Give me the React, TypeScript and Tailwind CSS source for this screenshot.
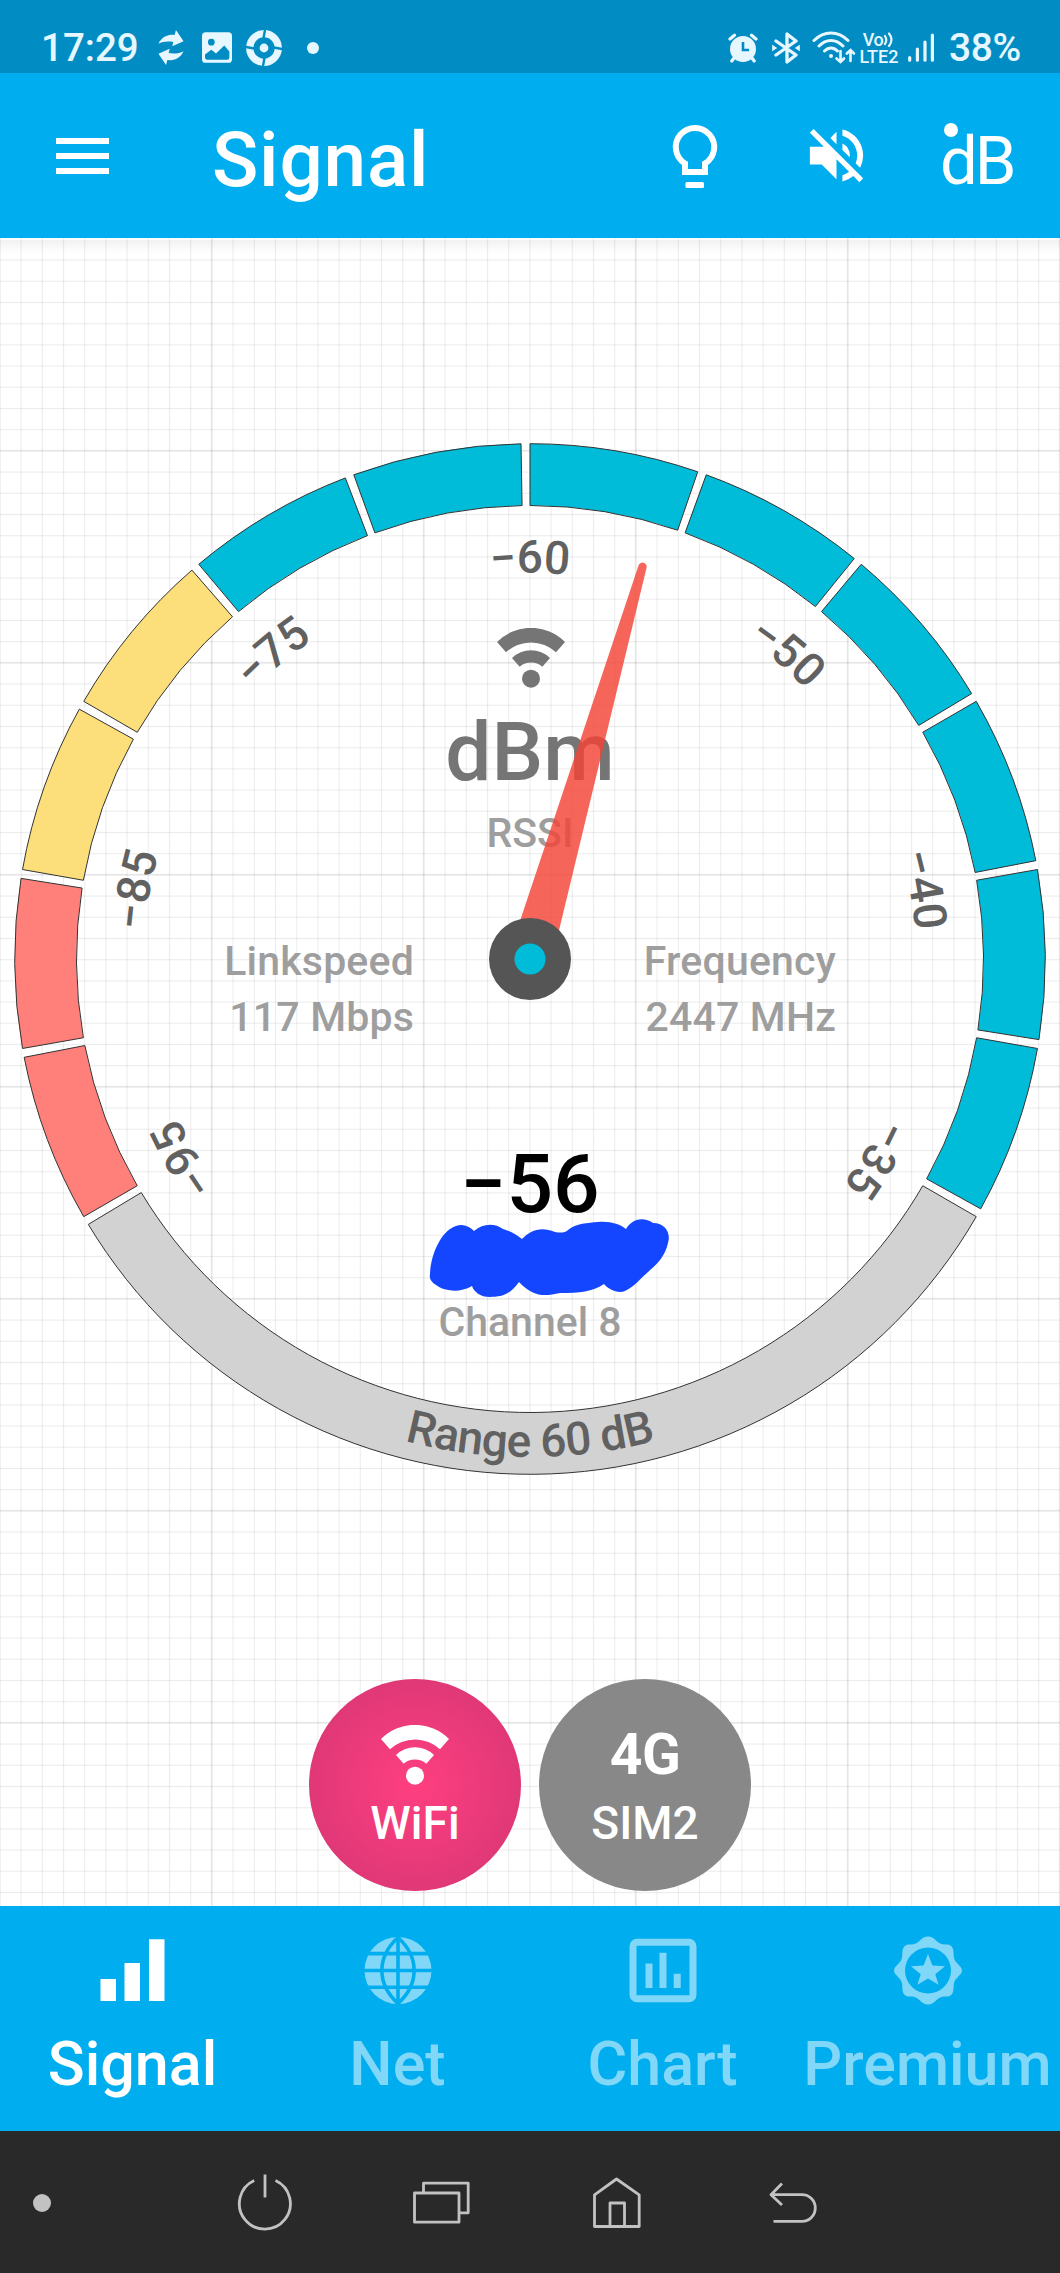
import type { ReactNode } from "react";
import { MdVolumeOff } from "react-icons/md";

type Segment = { from: number; to: number; fill: string };

const CYAN = "#00bcd8";
const YELLOW = "#fcdf7b";
const RED = "#ff7f7b";

const segmentFills = [RED, RED, YELLOW, YELLOW, CYAN, CYAN, CYAN, CYAN, CYAN, CYAN, CYAN, CYAN];

const segments: Segment[] = [
  ...segmentFills.map((fill, i) => ({ from: -120 + i * 20, to: -101 + i * 20, fill })),
  { from: 120, to: 239, fill: "#d2d2d2" },
];

const scaleLabels = [
  { angle: -120, text: "−95" },
  { angle: -80, text: "−85" },
  { angle: -40, text: "−75" },
  { angle: 0, text: "−60" },
  { angle: 40, text: "−50" },
  { angle: 80, text: "−40" },
  { angle: 120, text: "−35" },
];

// angle is measured clockwise from 12 o'clock
function polar(radius: number, angle: number) {
  const rad = (angle * Math.PI) / 180;
  return `${(radius * Math.sin(rad)).toFixed(2)} ${(-radius * Math.cos(rad)).toFixed(2)}`;
}

function segmentPath(from: number, to: number, outer = 515.3, inner = 453.5) {
  return `M${polar(outer, from)}A${outer} ${outer} 0 0 1 ${polar(outer, to)}L${polar(inner, to)}A${inner} ${inner} 0 0 0 ${polar(inner, from)}Z`;
}

function WifiIcon({ className }: { className?: string }) {
  return (
    <svg viewBox="0 0 204 180" className={className} fill="currentColor">
      <path d="M0 42A143.6 143.6 0 0 1 204 42L177 73A110 110 0 0 0 27 73Z" />
      <path d="M45 90A82 82 0 0 1 159 90L136 116A52 52 0 0 0 68 116Z" />
      <circle cx="102" cy="152" r="27" />
    </svg>
  );
}

function StatusBar() {
  return (
    <div className="flex h-[73px] items-center bg-[#018dc3] pl-[41px] pt-[22px] text-[#e6f7ff]">
      <span className="w-[100px] text-[38.5px] font-medium leading-[44px]">17:29</span>
      <svg viewBox="0 0 76 106" className="ml-[17px] h-[35px] w-[26px]" fill="currentColor">
        <path d="M0 42C10 20 30 13 49 15L53 0L76 34L42 49L45 36C28 33 12 35 0 42Z" />
        <path transform="rotate(180 38 53)" d="M0 42C10 20 30 13 49 15L53 0L76 34L42 49L45 36C28 33 12 35 0 42Z" />
      </svg>
      <svg viewBox="0 0 90 92" className="ml-[18px] h-[31px] w-[30px]">
        <rect width="90" height="92" rx="11" fill="currentColor" />
        <circle cx="28" cy="30" r="10" fill="#018dc3" />
        <path d="M9 67L28 53L42 64L67 40L82 58V76Q82 83 75 83H16Q9 83 9 76Z" fill="#018dc3" />
      </svg>
      <svg viewBox="0 0 36 36" className="ml-[14px] size-9">
        <circle cx="18" cy="18" r="14.3" stroke="currentColor" strokeWidth="7.2" fill="none" />
        <circle cx="18" cy="18" r="4.4" fill="currentColor" />
        <path d="M19 0L17.5 8M17 36L18.5 28M0 17L8 18.5M36 19L28 17.5" stroke="#018dc3" strokeWidth="2.4" />
      </svg>
      <span className="ml-[25px] size-3 rounded-full bg-current" />

      <svg viewBox="0 0 30 30" className="ml-[409px] size-[30px]" fill="none" stroke="currentColor" strokeWidth="3.2" strokeLinecap="round">
        <circle cx="15" cy="16" r="13" fill="currentColor" stroke="none" />
        <path d="M2 6L6.5 2.2M28 6L23.5 2.2M6 25L3.8 28M24 25L26.2 28" />
        <path d="M15 9V17H21" stroke="#018dc3" strokeWidth="2.6" strokeLinecap="butt" />
      </svg>
      <svg viewBox="0 0 28 32" className="ml-[14px] h-8 w-7" fill="none" stroke="currentColor" strokeWidth="3.3" strokeLinecap="round" strokeLinejoin="round">
        <path d="M4 9L24 23L15 30V2L24 9L4 23" />
        <path d="M.5 13.5L4.5 16L.5 18.5ZM27.5 13.5L23.5 16L27.5 18.5Z" fill="currentColor" strokeWidth="1" />
      </svg>
      <svg viewBox="0 0 44 34" className="ml-[12px] h-[34px] w-11" fill="none" stroke="currentColor" strokeWidth="3" strokeLinecap="round">
        <path d="M2 9.5C12 -.5 26 -.5 36 9.5M7 15C14 7.5 24 7.5 31 15M12.5 20C16.5 16 21.5 16 25.5 20" />
        <circle cx="19" cy="25" r="2" fill="currentColor" stroke="none" />
        <path d="M28.5 20V31M24.5 27.5L28.5 31L32 27.5M38.5 30V19M34.8 22.5L38.5 19L42 22.5" strokeWidth="2.6" />
      </svg>
      <span className="ml-[3px] flex w-10 flex-col items-center text-[18px] font-medium leading-[17px]">
        <span className="flex items-center tracking-[-0.5px]">
          Vo
          <svg viewBox="0 0 12 17" className="h-[17px] w-[12px]" fill="none" stroke="currentColor" strokeWidth="2.2" strokeLinecap="round">
            <path d="M2 5Q4.5 9 2 13M6 2.5Q11 8.5 6 15" />
          </svg>
        </span>
        <span>LTE2</span>
      </span>
      <svg viewBox="0 0 26 29" className="ml-[9px] h-[29px] w-[26px]" stroke="currentColor" strokeWidth="3.2" strokeLinecap="round">
        <path d="M1.7 24.5V27.2M9.4 16V27.2M17 9V27.2M24.4 2V27.2" />
      </svg>
      <span className="ml-[15px] text-[39px] font-medium leading-[44px] tracking-[-0.4px]">38%</span>
    </div>
  );
}

function Header() {
  return (
    <header className="flex h-[165px] items-center bg-[#00aef0] pl-14 text-white">
      <div className="flex w-[53px] flex-col gap-[9px]">
        <span className="h-1.5 bg-white" />
        <span className="h-1.5 bg-white" />
        <span className="h-1.5 bg-white" />
      </div>
      <h1 className="ml-[103px] mt-[9px] w-[453px] text-[76.5px] font-medium leading-[90px] tracking-[0.8px]">Signal</h1>
      <svg viewBox="0 0 60 72" className="h-[72px] w-[60px]" fill="none" stroke="currentColor" strokeWidth="6">
        <path d="M20 43.5A19.2 19.2 0 1 1 40 43.5V52H20Z" />
        <rect x="20.5" y="62" width="18.5" height="6" rx="1.5" fill="currentColor" stroke="none" />
      </svg>
      <MdVolumeOff className="ml-[76px] size-[71px]" />
      <span className="relative ml-[68px] mt-[10px] text-[67px] leading-[80px] tracking-[-3px]">
        dB
        <span className="absolute left-[4px] top-0.5 size-3.5 rounded-full bg-white" />
      </span>
    </header>
  );
}

function Gauge() {
  return (
    <svg viewBox="-530 -520 1060 1040" className="h-[1040px] w-[1060px]" fontWeight="500">
      <defs>
        {scaleLabels.map(({ angle }) => (
          <path key={angle} id={`label${angle}`} d={`M${polar(386, angle - 20)}A386 386 0 0 1 ${polar(386, angle + 20)}`} />
        ))}
        <path id="rangeArc" d={`M${polar(498, 220)}A498 498 0 0 0 ${polar(498, 140)}`} />
      </defs>

      {segments.map(({ from, to, fill }) => (
        <path key={from} d={segmentPath(from, to)} fill={fill} stroke="#333" strokeWidth="1" />
      ))}

      <g fill="#616161" fontSize="46" textAnchor="middle">
        {scaleLabels.map(({ angle, text }) => (
          <text key={angle}>
            <textPath href={`#label${angle}`} startOffset="50%">{text}</textPath>
          </text>
        ))}
        <text letterSpacing="-0.6">
          <textPath href="#rangeArc" startOffset="50%">Range 60 dB</textPath>
        </text>
      </g>

      <svg x="-33" y="-331" width="68" height="60" className="text-[#757575]">
        <WifiIcon />
      </svg>

      <g textAnchor="middle">
        <text y="-179" fontSize="82" fill="#757575">dBm</text>
        <text y="-112.5" fontSize="41" fill="#9e9e9e">RSSI</text>
        <text y="253" fontSize="82" fill="#000">−56</text>
        <text y="377" fontSize="41" fill="#9e9e9e">Channel 8</text>
      </g>
      <g fontSize="41" fill="#9e9e9e" letterSpacing="0.2">
        <text x="-116" y="16" textAnchor="end">Linkspeed</text>
        <text x="-116" y="72" textAnchor="end">117 Mbps</text>
        <text x="306" y="16" textAnchor="end">Frequency</text>
        <text x="306" y="72" textAnchor="end">2447 MHz</text>
      </g>

      <path
        fill="#1446ff"
        d="M-100 315C-99 294-89 276-80 270C-70 263-62 266-56 272C-47 264-35 264-27 270C-20 272-14 275-8 280C0 272 10 267 25 273C30 274 35 274 38 271C46 264 58 264 68 263C80 262 90 265 96 270C103 259 114 258 123 264C136 264 141 275 138 284C135 298 126 306 118 313C110 320 104 328 95 332C88 335 78 330 74 325C62 333 50 334 30 334C15 337 4 339-11 323C-20 336-29 338-40 338C-50 338-56 333-58 327C-70 334-84 332-91 328C-98 324-101 321-100 315Z"
      />

      <path transform="rotate(16)" d="M-21.5 0L-4.2 -408A4.2 4.2 0 0 1 4.2 -408L21.5 0Z" fill="#f44336" fillOpacity="0.82" />
      <circle r="41" fill="#555" />
      <circle r="15.5" fill={CYAN} />
    </svg>
  );
}

function SourceButton({ label, className, children }: { label: string; className: string; children: ReactNode }) {
  return (
    <button className={`flex size-[212px] flex-col items-center rounded-full pt-[46px] text-white ${className}`}>
      <span className="flex h-[60px] items-center text-[57px] font-bold leading-[60px] tracking-[-0.5px]">{children}</span>
      <span className="mt-[11px] text-[46px] font-medium leading-[54px]">{label}</span>
    </button>
  );
}

const tabs = [
  {
    label: "Signal",
    icon: <path d="M1.5 47H17V69H1.5ZM25.5 31H41V69H25.5ZM50 7.3H65.5V69H50Z" />,
  },
  {
    label: "Net",
    icon: (
      <>
        <circle cx="34" cy="38.5" r="33.5" />
        <g fill="none" stroke="#00aef0" strokeWidth="3.6">
          <path d="M34 4V73M0 38.5H68M0 21.6H68M0 55.2H68" />
          <path d="M34 5.5C12.5 25 12.5 52 34 71.5C55.5 52 55.5 25 34 5.5Z" />
        </g>
      </>
    ),
  },
  {
    label: "Chart",
    icon: (
      <>
        <rect x="4" y="10.3" width="60" height="56.5" rx="4" fill="none" stroke="currentColor" strokeWidth="7" />
        <path d="M16.5 31.5H23.5V56H16.5ZM30.5 20.7H37.5V56H30.5ZM44.7 41.7H51.7V56H44.7Z" />
      </>
    ),
  },
  {
    label: "Premium",
    icon: (
      <>
        <path
          fillRule="evenodd"
          d="M34 4.5C42 4.5 42 13 52 12.5C61 12.5 59 20 60 26C61 31 68 34 68 38.5C68 43 61 46 60 51C59 57 61 64.5 52 64.5C42 64 42 72.5 34 72.5C26 72.5 26 64 16 64.5C7 64.5 9 57 8 51C7 46 0 43 0 38.5C0 34 7 31 8 26C9 20 7 12.5 16 12.5C26 13 26 4.5 34 4.5ZM34 15.5A23 23 0 1 0 34 61.5A23 23 0 1 0 34 15.5Z"
        />
        <path d="M34 22L38.5 33.5L51 34.3L41.3 42.2L44.6 52.7L34 46.5L23.4 52.7L26.7 42.2L17 34.3L29.5 33.5Z" />
      </>
    ),
  },
];

function TabBar() {
  return (
    <nav className="grid h-[225px] grid-cols-4 bg-[#00aef0]">
      {tabs.map((tab, i) => (
        <div key={tab.label} className={`flex flex-col items-center pt-[26px] ${i === 0 ? "text-white" : "text-[#80d7f8]"}`}>
          <svg viewBox="0 0 68 76" className="h-[76px] w-[68px]" fill="currentColor">
            {tab.icon}
          </svg>
          <span className="mt-5 text-[61px] font-medium leading-[72px]">{tab.label}</span>
        </div>
      ))}
    </nav>
  );
}

const navIcons = [
  "M19.2 7.5A25.5 25.5 0 1 0 40.5 7.5M30 1.5V24.5",
  "M3.5 20H48V49.2H3.5ZM12.5 20V10.2H57.2V39.8H48",
  "M7.5 53.5V21.8L29.5 6L52.2 21.8V53.5ZM23 53.5V30H37.5V53.5",
  "M19 10.5L8 21.7L19 32M8 21.7H39A13.3 13.3 0 0 1 39 48.3H10.5",
];

function SystemNav() {
  return (
    <div className="flex h-[142px] items-center bg-[#292929] pl-[33px] pt-[2px] text-[#c2c2c2]">
      <span className="size-[18px] rounded-full bg-current" />
      <div className="ml-[184px] flex gap-[116px]">
        {navIcons.map((d) => (
          <svg key={d} viewBox="0 0 60 60" className="size-[60px]" fill="none" stroke="currentColor" strokeWidth="2.8" strokeLinejoin="round">
            <path d={d} />
          </svg>
        ))}
      </div>
    </div>
  );
}

export default function App() {
  return (
    <div className="flex h-[2273px] w-[1060px] flex-col overflow-hidden bg-white font-[Roboto,sans-serif]">
      <StatusBar />
      <Header />
      <main className="flex flex-1 flex-col items-center bg-[linear-gradient(#0000000d,#00000000_14px),repeating-linear-gradient(to_right,#0000_0_209.3px,#00000012_210.7px,#0000_212px),repeating-linear-gradient(#0000_0_209.3px,#00000012_210.7px,#0000_212px),repeating-linear-gradient(to_right,#0000_0_19px,#00000012_20.1px,#0000_21.2px),repeating-linear-gradient(#0000_0_19px,#00000012_20.1px,#0000_21.2px)] bg-position-[1px_2px] pt-[201px]">
        <Gauge />
        <div className="mt-[200px] flex gap-[18px]">
          <SourceButton label="WiFi" className="bg-[radial-gradient(circle_closest-side,#ff3f80,#e03877)]">
            <WifiIcon className="h-[60px] w-[68px]" />
          </SourceButton>
          <SourceButton label="SIM2" className="bg-[#888]">
            4G
          </SourceButton>
        </div>
      </main>
      <TabBar />
      <SystemNav />
    </div>
  );
}
